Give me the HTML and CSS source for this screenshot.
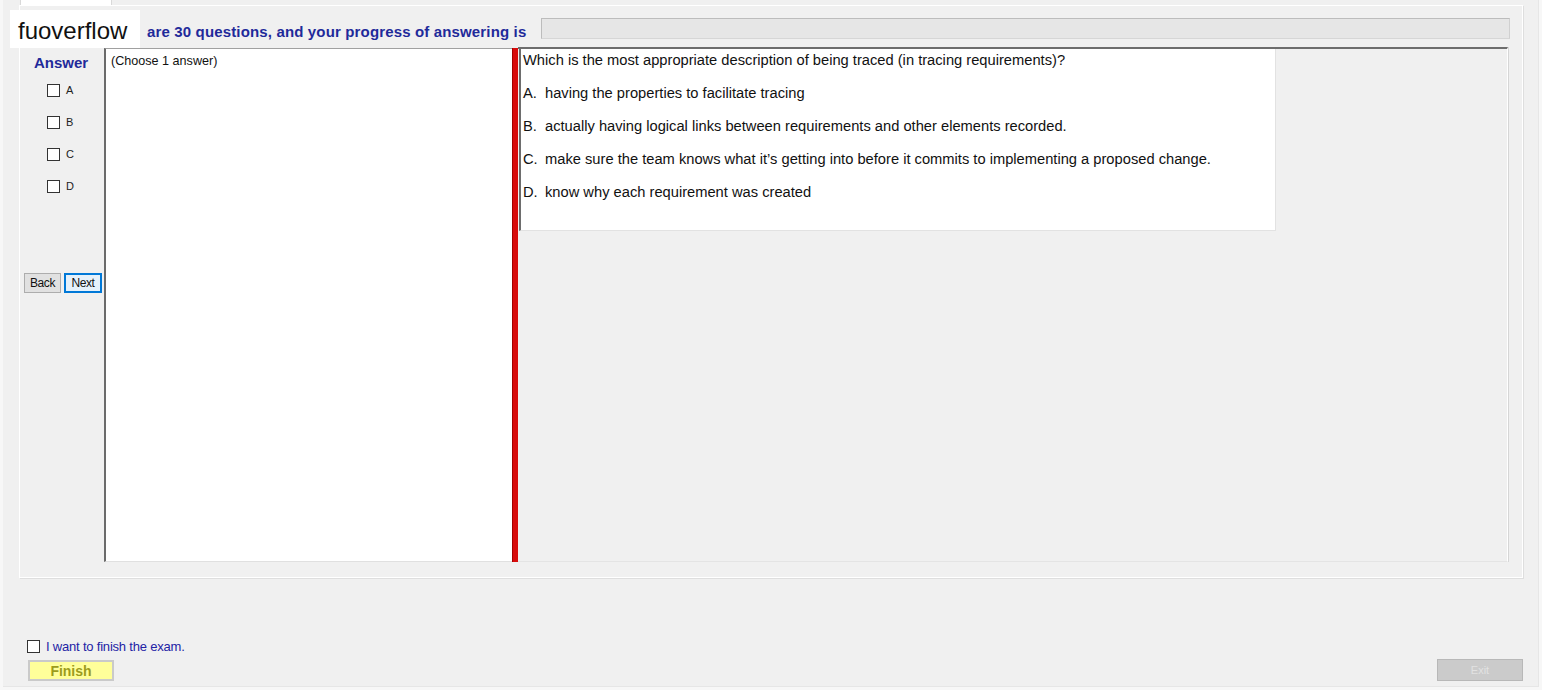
FILE: index.html
```html
<!DOCTYPE html>
<html lang="en">
<head>
  <meta charset="UTF-8" />
  <title>Exam</title>
  <link rel="stylesheet" href="styles.css">
</head>
<body>
  <div class="window">
    <div class="tabs"><span class="tab"></span></div>

    <section class="tabpage">
      <div class="progress-row">
        <span class="progress-label">are 30 questions, and your progress of answering is</span>
        <div class="progress"></div>
      </div>

      <div class="exam">
        <div class="answer-col">
          <div class="answer-title">Answer</div>
          <label class="opt"><span class="box"></span>A</label>
          <label class="opt"><span class="box"></span>B</label>
          <label class="opt"><span class="box"></span>C</label>
          <label class="opt"><span class="box"></span>D</label>
          <div class="nav">
            <button class="btn">Back</button>
            <button class="btn btn-next">Next</button>
          </div>
        </div>

        <div class="choice-panel">(Choose 1 answer)</div>
        <div class="splitter"></div>

        <div class="question-panel">
          <div class="question-box">
            <p>Which is the most appropriate description of being traced (in tracing requirements)?</p>
            <p><span class="key">A.</span>having the properties to facilitate tracing</p>
            <p><span class="key">B.</span>actually having logical links between requirements and other elements recorded.</p>
            <p><span class="key">C.</span>make sure the team knows what it’s getting into before it commits to implementing a proposed change.</p>
            <p><span class="key">D.</span>know why each requirement was created</p>
          </div>
        </div>
      </div>
    </section>

    <footer class="footer">
      <div class="finish">
        <label class="confirm"><span class="box"></span>I want to finish the exam.</label>
        <button class="btn-finish">Finish</button>
      </div>
      <button class="btn-exit">Exit</button>
    </footer>
  </div>

  <div class="brand">fuoverflow</div>
</body>
</html>
```

FILE: styles.css
```css
body {
  margin: 0;
  background: #f7f7f7;
  font-family: "Liberation Sans", Arial, sans-serif;
  color: #111;
}
.window {
  margin-left: 3px;
  width: 1535px;
  height: 686px;
  background: #f0f0f0;
  border-right: 1px solid #e6e6e6;
  border-bottom: 1px solid #e6e6e6;
  display: flex;
  flex-direction: column;
}
.tabs {
  height: 5px;
  padding-left: 17px;
}
.tab {
  display: block;
  width: 90px;
  height: 5px;
  background: #fff;
  border-left: 1px solid #d9d9d9;
  border-right: 1px solid #d9d9d9;
}
.tabpage {
  margin-left: 16px;
  width: 1504px;
  height: 573px;
  box-sizing: border-box;
  border: 1px solid #fff;
  box-shadow: 1px 1px 0 #dedede;
  display: flex;
  flex-direction: column;
}

/* progress line */
.progress-row {
  height: 41px;
  box-sizing: border-box;
  padding: 12px 12px 0 127px;
  display: flex;
  align-items: flex-start;
}
.progress-label {
  margin-top: 6px;
  font-size: 15px;
  line-height: 16px;
  font-weight: 700;
  letter-spacing: 0.15px;
  color: #1f2a9a;
  white-space: nowrap;
}
.progress {
  margin-left: auto;
  width: 969px;
  height: 21px;
  box-sizing: border-box;
  background: #e6e6e6;
  border: 1px solid #bcbcbc;
  border-right-color: #d0d0d0;
  border-bottom-color: #d6d6d6;
}

/* main area */
.exam {
  display: flex;
  margin-left: 4px;
  height: 515px;
}
.answer-col {
  width: 80px;
  flex: none;
}
.answer-title {
  padding: 8px 0 0 10px;
  font-size: 15px;
  line-height: 16px;
  font-weight: 700;
  color: #1f2a9a;
}
.opt {
  display: flex;
  align-items: center;
  height: 32px;
  padding-left: 23px;
  font-size: 11px;
  color: #222;
}
.opt:first-of-type {
  margin-top: 3px;
}
.box {
  display: inline-block;
  width: 13px;
  height: 13px;
  box-sizing: border-box;
  border: 1px solid #333;
  background: #fff;
  margin-right: 6px;
}
.nav {
  margin-top: 71px;
  display: flex;
  gap: 3px;
}
.btn {
  width: 37px;
  height: 20px;
  padding: 0;
  box-sizing: border-box;
  background: #e1e1e1;
  border: 1px solid #adadad;
  font-family: "Liberation Sans", Arial, sans-serif;
  font-size: 12px;
  letter-spacing: -0.4px;
  color: #111;
}
.btn-next {
  width: 38px;
  border: 2px solid #0078d7;
  background: #e5f1fb;
}
.choice-panel {
  margin-top: 1px;
  width: 408px;
  flex: none;
  box-sizing: border-box;
  background: #fff;
  border-left: 2px solid #6b6b6b;
  border-top: 1px solid #a0a0a0;
  border-bottom: 1px solid #e0e0e0;
  padding: 5px 0 0 5px;
  font-size: 12.6px;
  line-height: 14px;
}
.splitter {
  margin-top: 1px;
  width: 6px;
  flex: none;
  background: #d80c0c;
  border-left: 1px solid #a40000;
  box-sizing: border-box;
}
.question-panel {
  width: 990px;
  flex: none;
  box-sizing: border-box;
  border-top: 2px solid #6d6d6d;
  border-right: 1px solid #fff;
  border-bottom: 1px solid #e4e4e4;
  box-shadow: 1px 0 0 #d6d6d6;
  background: #f0f0f0;
  padding-left: 1px;
}
.question-box {
  width: 757px;
  height: 182px;
  box-sizing: border-box;
  background: #fff;
  border-left: 2px solid #6d6d6d;
  border-right: 1px solid #e2e2e2;
  border-bottom: 1px solid #e2e2e2;
  padding: 3px 0 0 2px;
  font-size: 14.7px;
  line-height: 16px;
}
.question-box p {
  margin: 0 0 17px;
}
.key {
  display: inline-block;
  width: 22px;
}

/* bottom bar */
.footer {
  flex: 1;
  display: flex;
  justify-content: space-between;
  align-items: flex-end;
  padding: 0 15px 5px 24px;
}
.confirm {
  display: flex;
  align-items: center;
  font-size: 13px;
  letter-spacing: -0.2px;
  color: #2323a5;
}
.confirm .box {
  margin-right: 6px;
}
.btn-finish {
  margin: 6px 0 0 1px;
  width: 86px;
  height: 21px;
  padding: 0;
  background: #ffff9a;
  border: 2px solid #cacaca;
  font-family: "Liberation Sans", Arial, sans-serif;
  font-size: 14px;
  font-weight: 700;
  color: #9c9c1c;
}
.btn-exit {
  width: 86px;
  height: 22px;
  padding: 0;
  background: #cbcbcb;
  border: 1px solid #b8b8b8;
  font-family: "Liberation Sans", Arial, sans-serif;
  font-size: 11px;
  color: #e2e2e2;
}

/* watermark over the header */
.brand {
  position: absolute;
  left: 10px;
  top: 10px;
  width: 130px;
  height: 38px;
  box-sizing: border-box;
  padding-left: 8px;
  background: #fff;
  font-size: 24px;
  line-height: 42px;
  color: #111;
}
```
